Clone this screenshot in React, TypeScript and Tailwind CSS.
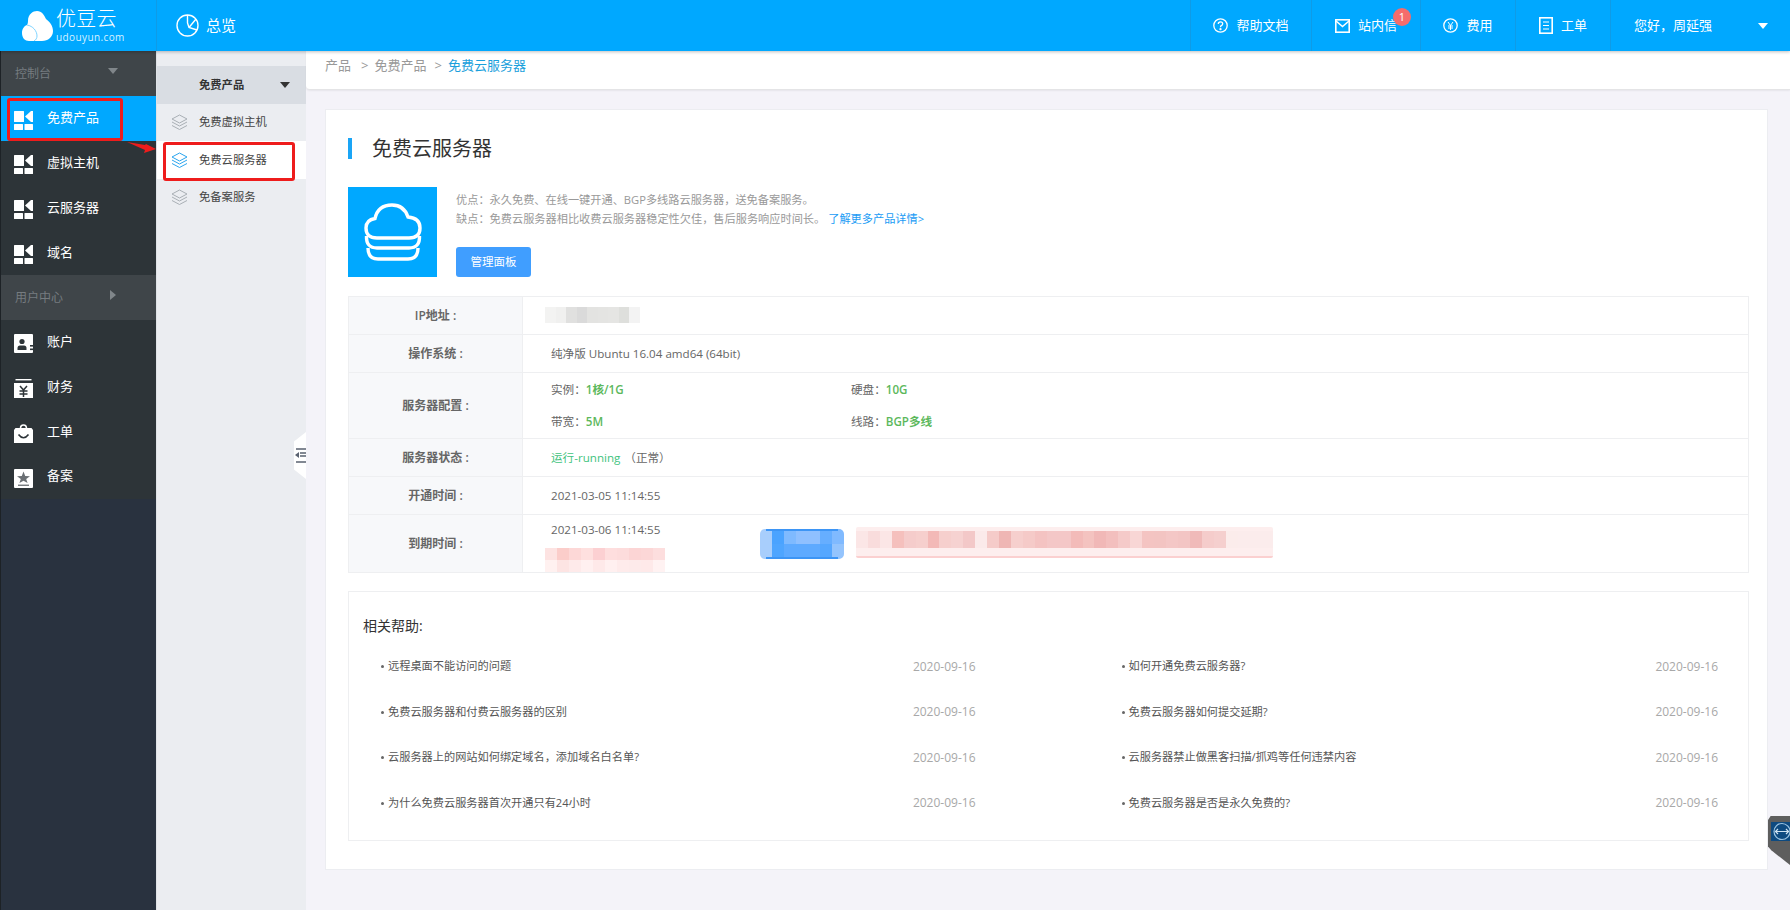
import React from "react";

const FONT = '"Open Sans","Noto Sans CJK SC",sans-serif';

function GridIcon() {
  return (
    <svg width="19" height="19" viewBox="0 0 19 19" fill="#fff">
      <rect x="0" y="0" width="10" height="11" rx="0.5" />
      <rect x="0" y="13" width="9" height="6" rx="0.5" />
      <rect x="10.5" y="13" width="8.5" height="6" rx="0.5" />
      <path d="M11 5.5 L17 0 L19 0 L19 11 L17 11 Z" />
    </svg>
  );
}
function AccountIcon() {
  return (
    <svg width="19" height="19" viewBox="0 0 19 19">
      <rect width="19" height="19" rx="1" fill="#fff" />
      <circle cx="8" cy="7.5" r="2.6" fill="#2d3438" />
      <path d="M3.5 16 V14 Q3.5 11.5 6 11.5 H10 Q12.5 11.5 12.5 14 V16 Z" fill="#2d3438" />
      <rect x="16" y="11" width="3" height="1.6" fill="#2d3438" />
      <rect x="16" y="14.5" width="3" height="1.6" fill="#2d3438" />
    </svg>
  );
}
function FinanceIcon() {
  return (
    <svg width="19" height="19" viewBox="0 0 19 19">
      <rect x="1.5" y="0" width="16" height="1.4" fill="#fff" />
      <rect x="0" y="4" width="19" height="15" fill="#fff" />
      <path d="M6 7 L9.5 11 L13 7 M9.5 11 V18 M5.5 12 H13.5 M5.5 15 H13.5" stroke="#2d3438" strokeWidth="1.5" fill="none" />
    </svg>
  );
}
function BagIcon() {
  return (
    <svg width="19" height="19" viewBox="0 0 19 19">
      <path d="M6.5 4.5 Q6.5 1 9.5 1 Q12.5 1 12.5 4.5" stroke="#fff" strokeWidth="1.6" fill="none" />
      <path d="M1.5 4 H17.5 L19 6 V19 H0 V6 Z" fill="#fff" />
      <path d="M4.5 10.5 Q9.5 17 14.5 10.5" stroke="#2d3438" strokeWidth="1.6" fill="none" />
    </svg>
  );
}
function RecordIcon() {
  return (
    <svg width="19" height="19" viewBox="0 0 19 19">
      <rect width="19" height="19" rx="1" fill="#fff" />
      <path d="M9.5 2.5 L11.2 7 L16 7.2 L12.2 10 L13.6 14 L9.5 11.8 L5.4 14 L6.8 10 L3 7.2 L7.8 7 Z" fill="#6a6f73" />
      <rect x="4" y="15.6" width="11" height="1.3" fill="#6a6f73" />
    </svg>
  );
}
function LayersIcon({ color }: { color: string }) {
  return (
    <svg width="17" height="17" viewBox="0 0 17 17" fill="none" stroke={color} strokeWidth="1" strokeLinejoin="round">
      <path d="M8.5 1 L16 5 L8.5 9 L1 5 Z" />
      <path d="M1 8 L8.5 12 L16 8" />
      <path d="M1 11.5 L8.5 15.5 L16 11.5" />
    </svg>
  );
}
function Down({ color = "#fff" }: { color?: string }) {
  return (
    <svg width="10" height="6" viewBox="0 0 10 6">
      <path d="M0 0 H10 L5 6 Z" fill={color} />
    </svg>
  );
}

const sidebarTop = [
  { label: "免费产品", active: true },
  { label: "虚拟主机" },
  { label: "云服务器" },
  { label: "域名" },
];

function SideRow({ label, icon, active }: { label: string; icon: React.ReactNode; active?: boolean }) {
  return (
    <div className={`h-[44.75px] flex items-center pl-[13px] text-white text-[13px] ${active ? "bg-[#00a8ff]" : ""}`}>
      <span className="w-[33px] flex mt-[4px]">{icon}</span>
      <span>{label}</span>
    </div>
  );
}

function SideGroup({ label, arrow }: { label: string; arrow: React.ReactNode }) {
  return (
    <div className="h-[44.75px] flex items-center justify-between pl-[14px] pr-[38px] bg-[#3f4549] text-[12px] text-[#767c80]">
      <span className="mt-[1px]">{label}</span>
      <span className="-mt-[4px] flex">{arrow}</span>
    </div>
  );
}

function Mosaic({ rows, cell, h }: { rows: string[][]; cell: number; h: number }) {
  return (
    <div className="flex flex-col">
      {rows.map((r, i) => (
        <div key={i} className="flex">
          {r.map((c, j) => (
            <div key={j} style={{ width: cell, height: h, background: c }} />
          ))}
        </div>
      ))}
    </div>
  );
}

function HeadItem({ icon, label, w, badge }: { icon: React.ReactNode; label: string; w: string; badge?: boolean }) {
  return (
    <div className={`${w} h-full border-l border-[#0f9be6] flex items-center justify-center gap-[8px] text-[13px] text-white relative`}>
      {icon}
      <span>{label}</span>
      {badge && (
        <span className="absolute left-[81px] top-[8px] w-[18px] h-[18px] rounded-full bg-[#f56c6c] text-white text-[11px] flex items-center justify-center">
          1
        </span>
      )}
    </div>
  );
}

const helpLeft = [
  "远程桌面不能访问的问题",
  "免费云服务器和付费云服务器的区别",
  "云服务器上的网站如何绑定域名，添加域名白名单?",
  "为什么免费云服务器首次开通只有24小时",
];
const helpRight = [
  "如何开通免费云服务器?",
  "免费云服务器如何提交延期?",
  "云服务器禁止做黑客扫描/抓鸡等任何违禁内容",
  "免费云服务器是否是永久免费的?",
];

function HelpRow({ text, left }: { text: string; left?: boolean }) {
  return (
    <div className="h-[45.5px] flex items-center justify-between">
      <div className={`flex items-center gap-[4px] text-[11.2px] text-[#555] ${left ? "ml-[2px]" : ""}`}>
        <span className="w-[3px] h-[3px] rounded-full bg-[#666]" />
        <span>{text}</span>
      </div>
      <span className="text-[12px] text-[#a8a8a8]">2020-09-16</span>
    </div>
  );
}

function Row({ label, h, children }: { label: string; h: string; children: React.ReactNode }) {
  return (
    <div className={`flex ${h} border-b border-[#eeeff1] last:border-b-0`}>
      <div className="w-[174px] bg-[#f7f8fa] border-r border-[#eeeff1] flex items-center justify-center text-[12px] font-semibold text-[#666]">
        {label}
      </div>
      <div className="flex-1 pl-[28px] text-[11.6px] text-[#666] relative">{children}</div>
    </div>
  );
}

const pinkA = [
  ["#fde3e2", "#fbcdca", "#fdd8d7", "#fee0df", "#fcd0d2", "#fedede", "#fddcdc", "#fcd5d5", "#fcd7d7", "#fddede"],
  ["#fff1f0", "#fde4e3", "#feeaea", "#fff0f0", "#fee9e9", "#fff0f0", "#feebeb", "#fdeaea", "#fee9e9", "#fff2f2"],
];
const blue = [
  ["#a8cefc", "#4aa3ff", "#7fbaff", "#8fc0ff", "#8fc0ff", "#66aeff", "#80baff"],
  ["#a8cefc", "#4ea5ff", "#5eaaff", "#5eaaff", "#5eaaff", "#55a7ff", "#94c4fd"],
];
const pinkLong = ["#fbe6e6","#f9dcdc","#fbe6e6","#f5c0bd","#f5cccb","#f6cfcd","#f3b9b7","#f6cfcd","#f6d2d1","#f3c8c8","#fbeaea","#f5cbc9","#efb6b4","#f6cfcd","#f5cac8","#f4c3c2","#f4c7c7","#f4c7c7","#f3bbb9","#f4c3c0","#f1b8b7","#f3bfbe","#f5cac9","#f8d6d5","#f4c4c2","#f3c4c2","#f4c7c6","#f3c5c4","#f0bab9","#f5cccb","#f5cfce","#fbeceb","#fbecec","#fbecec","#fbecec"];

export default function App() {
  return (
    <div className="relative w-[1790px] h-[910px] overflow-hidden flex flex-col bg-[#f4f3f9]" style={{ fontFamily: FONT }}>
      <header className="h-[51px] shrink-0 bg-[#00a8ff] flex items-stretch shadow-[0_1px_3px_rgba(0,0,0,0.25)] z-10 text-white">
        <div className="w-[157px] border-r border-[#0f9be6] flex items-center pl-[22px] gap-[3px]">
          <svg width="31" height="30" viewBox="0 0 31 30" fill="#fff">
            <path d="M6 10 C6 3 11 0 15 0 C20 0 22 4 24 8 C28 11 31 15 31 20 C31 26 26 30 20 30 H7 C3 30 0 27 0 22 C0 18 2 15 5 14 C5.5 13 6 12 6 10 Z" />
            <path d="M5 14 C11 15 15 20 15 25 C15 27 14 29 12 30" stroke="#7fd4ff" strokeWidth="1" fill="none" />
          </svg>
          <div className="flex flex-col items-start leading-none">
            <span className="text-[20px] leading-[22px] tracking-[0.2px] font-light">优豆云</span>
            <span className="text-[10px] leading-[12px] mt-[1px] tracking-[0.4px] text-[#d8f1ff]">udouyun.com</span>
          </div>
        </div>
        <div className="flex-1 flex items-center pl-[19px] gap-[7px] text-[15px]">
          <svg width="23" height="23" viewBox="0 0 23 23" fill="none" stroke="#fff" strokeWidth="1.4">
            <circle cx="11.5" cy="11.5" r="10.5" />
            <path d="M11.5 1 L11.5 9 L13 13.5 L21 16 M13 13.5 L20 5" />
          </svg>
          <span>总览</span>
        </div>
        <HeadItem
          w="w-[121px]"
          label="帮助文档"
          icon={
            <svg width="15" height="15" viewBox="0 0 15 15" fill="none" stroke="#fff" strokeWidth="1.3">
              <circle cx="7.5" cy="7.5" r="6.7" />
              <path d="M5.3 6 Q5.3 3.8 7.5 3.8 Q9.7 3.8 9.7 5.8 Q9.7 7 8.3 7.6 Q7.5 8 7.5 9.3" />
              <circle cx="7.5" cy="11.2" r="0.5" />
            </svg>
          }
        />
        <HeadItem
          w="w-[109px]"
          label="站内信"
          badge
          icon={
            <svg width="15" height="14" viewBox="0 0 15 14" fill="none" stroke="#fff" strokeWidth="1.6">
              <rect x="0.8" y="0.8" width="13.4" height="12.4" />
              <path d="M1 2 L7.5 7.5 L14 2" />
            </svg>
          }
        />
        <HeadItem
          w="w-[95px]"
          label="费用"
          icon={
            <svg width="15" height="15" viewBox="0 0 15 15" fill="none" stroke="#fff" strokeWidth="1.3">
              <circle cx="7.5" cy="7.5" r="6.7" />
              <path d="M5 4 L7.5 7.5 L10 4 M7.5 7.5 V12 M5 8 H10 M5 10 H10" strokeWidth="1" />
            </svg>
          }
        />
        <HeadItem
          w="w-[95px]"
          label="工单"
          icon={
            <svg width="14" height="17" viewBox="0 0 14 17" fill="none" stroke="#fff" strokeWidth="1.6">
              <rect x="0.8" y="0.8" width="12.4" height="15.4" />
              <path d="M4 5 H10 M4 8.5 H10 M4 12 H10" strokeWidth="1.2" />
            </svg>
          }
        />
        <div className="w-[180px] border-l border-[#0f9be6] flex items-center justify-between pl-[23px] pr-[22px] text-[13px]">
          <span>您好，周延强</span>
          <Down />
        </div>
      </header>

      <div className="flex-1 flex min-h-0">
        <aside className="w-[157px] shrink-0 bg-[#29323f] border-l border-[#1d2226] border-r border-r-[#dfe2e6] flex flex-col">
          <div className="bg-[#2d3438]">
            <SideGroup label="控制台" arrow={<Down color="#80868a" />} />
            {sidebarTop.map((s) => (
              <SideRow key={s.label} label={s.label} active={s.active} icon={<GridIcon />} />
            ))}
            <SideGroup
              label="用户中心"
              arrow={
                <svg width="6" height="10" viewBox="0 0 6 10" className="mr-[2px]">
                  <path d="M0 0 L6 5 L0 10 Z" fill="#80868a" />
                </svg>
              }
            />
            <SideRow label="账户" icon={<AccountIcon />} />
            <SideRow label="财务" icon={<FinanceIcon />} />
            <SideRow label="工单" icon={<BagIcon />} />
            <SideRow label="备案" icon={<RecordIcon />} />
          </div>
        </aside>

        <nav className="w-[149px] shrink-0 bg-[#ebedf1] pt-[15px] text-[11.3px] text-[#444]">
          <div className="h-[38px] bg-[#d9dde3] flex items-center justify-between pl-[42px] pr-[16px] font-semibold text-[#333]">
            <span>免费产品</span>
            <Down color="#333" />
          </div>
          <div className="h-[37px] flex items-center pl-[14px] gap-[11px]">
            <LayersIcon color="#a9afb5" />
            <span>免费虚拟主机</span>
          </div>
          <div className="h-[38px] flex items-center pl-[14px] gap-[11px] bg-white">
            <LayersIcon color="#2ba5ee" />
            <span>免费云服务器</span>
          </div>
          <div className="h-[37px] flex items-center pl-[14px] gap-[11px]">
            <LayersIcon color="#a9afb5" />
            <span>免备案服务</span>
          </div>
        </nav>

        <main className="flex-1 min-w-0 flex flex-col">
          <div className="h-[39px] shrink-0 bg-white rounded-bl-[4px] border-b border-[#e4e4e6] shadow-[0_1px_2px_rgba(0,0,0,0.06)] pl-[19px] flex items-start pt-[5px] text-[13px] text-[#999]">
            <span>产品</span>
            <span className="ml-[10px]">&gt;</span>
            <span className="ml-[6px]">免费产品</span>
            <span className="ml-[8px]">&gt;</span>
            <span className="ml-[6px] text-[#1aa0dc]">免费云服务器</span>
          </div>

          <section className="mt-[19px] ml-[19px] mr-[22px] h-[761px] bg-white border border-[#ecedf1] pl-[22px] pr-[18px] pt-[27px]">
            <div className="flex items-center h-[22px]">
              <span className="w-[4px] h-[21px] bg-[#1aa5f6]" />
              <h1 className="ml-[20px] mt-[2px] text-[20px] text-[#333] font-normal leading-none">免费云服务器</h1>
            </div>

            <div className="flex mt-[28px] h-[90px]">
              <div className="w-[89px] h-[90px] bg-[#00a8ff] flex items-center justify-center">
                <svg width="58" height="58" viewBox="0 0 58 58" fill="none" stroke="#fff" strokeWidth="3.4">
                  <path d="M13 35 Q2 35 2 25 Q2 17 11 15.5 Q14 2 28 2 Q40 2 44 14 Q56 15 56 25 Q56 35 45 35 Z" />
                  <path d="M2.5 33 Q2 45 13 45 H45 Q56 45 55.5 33" />
                  <path d="M4 45 Q4 56 14 56 H44 Q54 56 54 45" />
                </svg>
              </div>
              <div className="ml-[19px] flex flex-col">
                <p className="mt-[3px] text-[11.2px] leading-[19px] text-[#999]">优点：永久免费、在线一键开通、BGP多线路云服务器，送免备案服务。</p>
                <p className="text-[11.2px] leading-[19px] text-[#999]">
                  缺点：免费云服务器相比收费云服务器稳定性欠佳，售后服务响应时间长。
                  <span className="ml-[3px] text-[#1a9cf5]">了解更多产品详情&gt;</span>
                </p>
                <button className="mt-auto w-[75px] h-[30px] rounded-[3px] bg-[#409eff] text-white text-[11.5px]">管理面板</button>
              </div>
            </div>

            <div className="mt-[19px] border border-[#eeeff1] flex flex-col">
              <Row label="IP地址 :" h="h-[38px]">
                <div className="absolute left-[22px] top-[10px] flex h-[16px]">
                  {["#f3f3f2","#f0f0ef","#e0e0df","#dadada","#e3e3e1","#e4e4e2","#e5e5e3","#dedfdc","#f3f3f3"].map((c, i) => (
                    <div key={i} className="w-[10.5px] h-full" style={{ background: c }} />
                  ))}
                </div>
              </Row>
              <Row label="操作系统 :" h="h-[38px]">
                <div className="h-full flex items-center">纯净版 Ubuntu 16.04 amd64 (64bit)</div>
              </Row>
              <Row label="服务器配置 :" h="h-[66px]">
                <div className="grid grid-cols-[300px_1fr] grid-rows-2 h-full pt-[1px]">
                  <div className="flex items-center">实例：<b className="text-[#5cb85c] font-semibold">1核/1G</b></div>
                  <div className="flex items-center">硬盘：<b className="text-[#5cb85c] font-semibold">10G</b></div>
                  <div className="flex items-center">带宽：<b className="text-[#5cb85c] font-semibold">5M</b></div>
                  <div className="flex items-center">线路：<b className="text-[#5cb85c] font-semibold">BGP多线</b></div>
                </div>
              </Row>
              <Row label="服务器状态 :" h="h-[38px]">
                <div className="h-full flex items-center">
                  <span className="text-[#3fc380]">运行-running</span>
                  <span className="ml-[4px]">（正常）</span>
                </div>
              </Row>
              <Row label="开通时间 :" h="h-[38px]">
                <div className="h-full flex items-center">2021-03-05 11:14:55</div>
              </Row>
              <Row label="到期时间 :" h="h-[57px]">
                <div className="pt-[6px] leading-[18px]">2021-03-06 11:14:55</div>
                <div className="absolute left-[22px] top-[33px]">
                  <Mosaic rows={pinkA} cell={12} h={12} />
                </div>
                <div className="absolute left-[237px] top-[14px] rounded-[5px] overflow-hidden">
                  <Mosaic rows={blue} cell={12} h={15} />
                  <div className="absolute left-[6px] right-[6px] top-0 h-[2px] bg-[#3d95f5]" />
                  <div className="absolute left-[6px] right-[6px] bottom-0 h-[2px] bg-[#3d95f5]" />
                </div>
                <div className="absolute left-[333px] top-[12px] w-[417px] h-[31px] rounded-[2px] bg-[#fdeeee] border-b-2 border-[#fbd0d0] flex items-center">
                  <div className="flex w-full -mt-[4px]">
                    {pinkLong.map((c, i) => (
                      <div key={i} className="h-[17px] flex-1" style={{ background: c }} />
                    ))}
                  </div>
                </div>
              </Row>
            </div>

            <div className="mt-[18px] h-[250px] border border-[#eeeff1] pl-[14px] pr-[30px] pt-[24px]">
              <h2 className="text-[14px] leading-[20px] font-normal text-[#333]">相关帮助:</h2>
              <div className="grid grid-cols-2 gap-x-[146px] mt-[8px] pl-[16px]">
                {helpLeft.map((t, i) => (
                  <React.Fragment key={t}>
                    <HelpRow text={t} left />
                    <HelpRow text={helpRight[i]} />
                  </React.Fragment>
                ))}
              </div>
            </div>
          </section>
        </main>
      </div>

      {/* annotations and overlays */}
      <div className="absolute left-[7px] top-[98px] w-[116px] h-[43px] border-[3px] border-[#ee1c1c] rounded-[3px]" />
      <div className="absolute left-[163px] top-[142px] w-[132px] h-[39px] border-[3px] border-[#ee1c1c] rounded-[3px]" />
      <svg className="absolute left-[126px] top-[140px]" width="32" height="14" viewBox="0 0 32 14">
        <path d="M1 2 L19 5 L20 4 L30 9 L18 13 L19 10 Z" fill="#ee1c1c" />
      </svg>
      <div className="absolute left-[294px] top-[432px] w-[12px] h-[47px] bg-white [clip-path:polygon(100%_0,100%_100%,0_80%,0_20%)] flex items-center justify-end">
        <svg width="11" height="15" viewBox="0 0 11 15">
          <path d="M1 1 H11 M5 5 H11 M5 8 H11 M1 14 H11" stroke="#5a6270" strokeWidth="1.4" />
          <path d="M4 4 L0 7 L4 10 Z" fill="#5a6270" />
        </svg>
      </div>
      <div className="absolute left-[1768px] top-[816px] w-[22px] h-[49px] bg-[#5e5e5e] [clip-path:polygon(12%_0,100%_0,100%_100%,15%_70%,0_62%,0_8%)]">
        <div className="absolute left-[3px] top-[6px] w-[19px] h-[19px] bg-[#0e4a80] flex items-center justify-center overflow-hidden">
          <svg width="19" height="19" viewBox="0 0 19 19" fill="none">
            <circle cx="11" cy="9.5" r="8" stroke="#9cc3e0" strokeWidth="1.2" />
            <path d="M5 9.5 H17 M7 7 L4.5 9.5 L7 12 M15 7 L17.5 9.5 L15 12" stroke="#cfe2f1" strokeWidth="1.2" />
          </svg>
        </div>
      </div>
    </div>
  );
}
